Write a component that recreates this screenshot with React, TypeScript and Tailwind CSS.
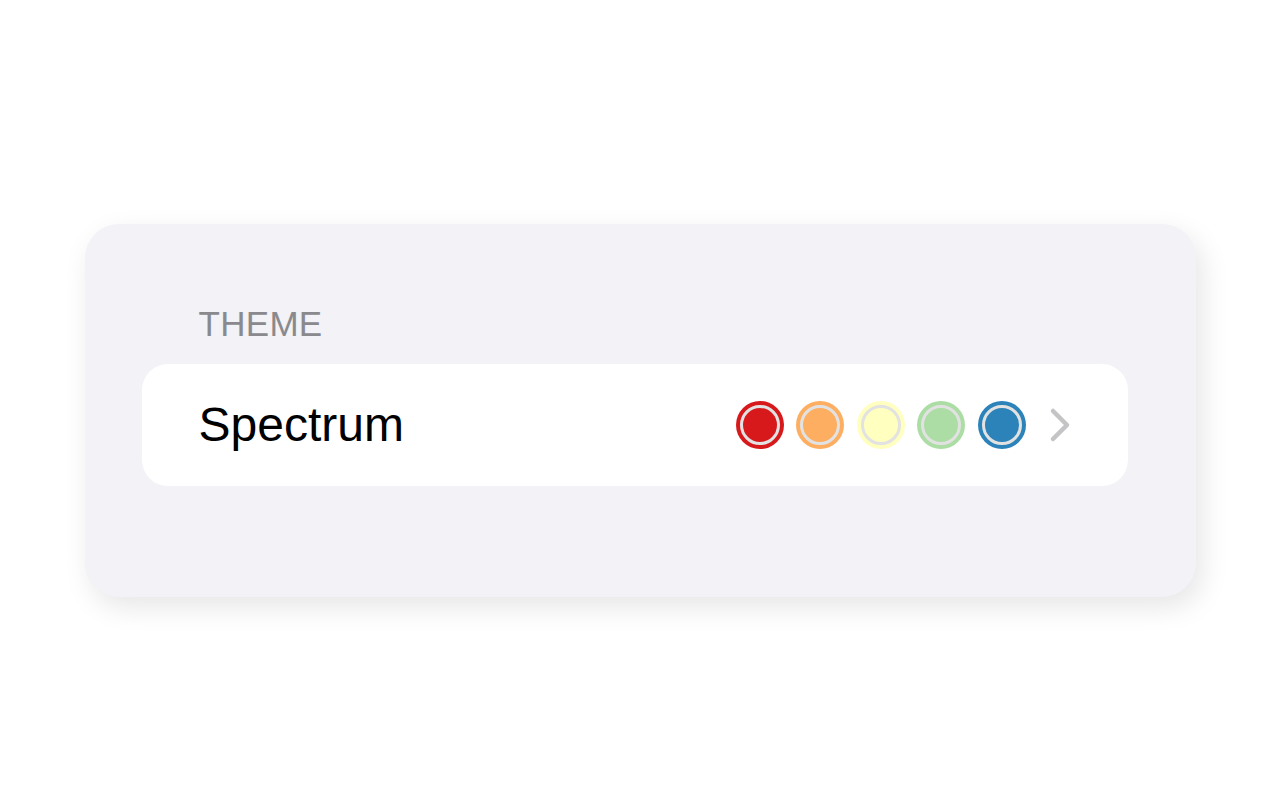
import React from 'react';

const swatches = [
  { key: 'red', color: 'bg-[#d7191c]' },
  { key: 'orange', color: 'bg-[#fdae61]' },
  { key: 'yellow', color: 'bg-[#ffffbf]' },
  { key: 'green', color: 'bg-[#abdda4]' },
  { key: 'blue', color: 'bg-[#2b83ba]' },
];

export default function App() {
  return (
    <div className="w-[1280px] h-[800px] bg-white flex items-center justify-center font-['Liberation_Sans',Arial,sans-serif]">
      <div className="w-[1111px] h-[373px] mt-[20px] bg-[#f2f2f7] rounded-[34px] shadow-[6px_10px_28px_rgba(0,0,0,0.10)] pl-[57px] pr-[68px] pt-[82px]">
        {/* Section header */}
        <div className="px-[57px] text-[35px] leading-none text-[#8a8a8e] tracking-[0.3px] mb-[23px]">
          THEME
        </div>

        {/* Theme row */}
        <div className="h-[122px] bg-white rounded-[26px] flex items-center justify-between pl-[57px] pr-[57px]">
          <span className="text-[48px] text-black leading-none">Spectrum</span>
          <div className="flex items-center">
            <div className="flex items-center gap-[12.5px]">
              {swatches.map((s) => (
                <div key={s.key} className={`w-12 h-12 rounded-full p-[4px] ${s.color}`}>
                  <div className={`w-full h-full rounded-full border-[3px] border-[#e2e2e2] ${s.color}`} />
                </div>
              ))}
            </div>
            <svg
              className="ml-[23px]"
              width="22"
              height="36"
              viewBox="0 0 22 36"
              fill="none"
              stroke="#c4c4c6"
              strokeWidth="4.5"
              strokeLinecap="round"
              strokeLinejoin="round"
            >
              <path d="M4 4 L18 18 L4 32" />
            </svg>
          </div>
        </div>
      </div>
    </div>
  );
}
